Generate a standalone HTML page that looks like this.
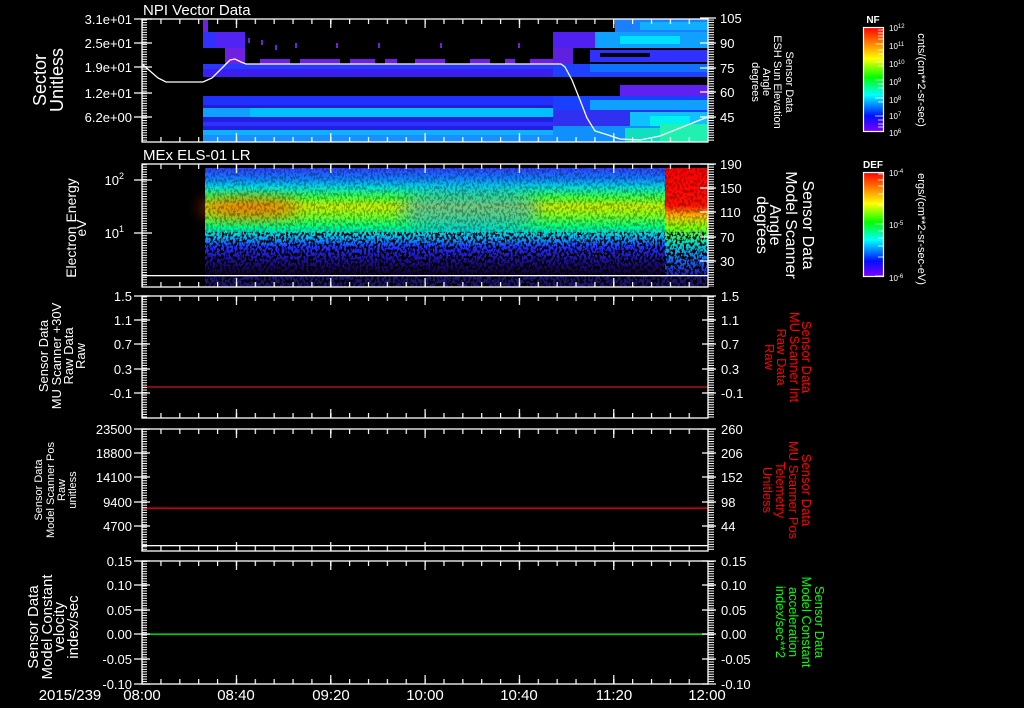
<!DOCTYPE html>
<html><head><meta charset="utf-8"><style>
html,body{margin:0;padding:0;background:#000;}
svg{display:block}
text{font-family:"Liberation Sans",sans-serif;fill:#fff;}
</style></head><body>
<svg width="1024" height="708" viewBox="0 0 1024 708" xmlns="http://www.w3.org/2000/svg">
<defs>
 <pattern id="xm" patternUnits="userSpaceOnUse" x="141.5" y="0" width="18.867" height="10"><rect x="0" y="0" width="1.2" height="10" fill="#fff"/></pattern>
 <pattern id="xM" patternUnits="userSpaceOnUse" x="141.5" y="0" width="94.33" height="10"><rect x="0" y="0" width="1.2" height="10" fill="#fff"/></pattern>
 <pattern id="yt" patternUnits="userSpaceOnUse" x="0" y="0" width="10" height="2.45"><rect x="0" y="0" width="10" height="1" fill="#fff"/></pattern>
 <linearGradient id="cb" x1="0" y1="0" x2="0" y2="1">
  <stop offset="0" stop-color="#ff0000"/><stop offset="0.15" stop-color="#ff8000"/>
  <stop offset="0.3" stop-color="#ffff00"/><stop offset="0.48" stop-color="#00ff00"/>
  <stop offset="0.65" stop-color="#00ffff"/><stop offset="0.85" stop-color="#0010ff"/>
  <stop offset="1" stop-color="#8000ff"/>
 </linearGradient>
 <linearGradient id="p2" x1="0" y1="0" x2="0" y2="1">
  <stop offset="0" stop-color="#3040ff"/><stop offset="0.1" stop-color="#1080ff"/>
  <stop offset="0.18" stop-color="#00e0e0"/><stop offset="0.27" stop-color="#40ff40"/>
  <stop offset="0.36" stop-color="#c8f000"/><stop offset="0.44" stop-color="#80ff20"/>
  <stop offset="0.55" stop-color="#00ff80"/><stop offset="0.64" stop-color="#00c0ff"/>
  <stop offset="0.74" stop-color="#2030ff"/><stop offset="0.86" stop-color="#2010a0"/>
  <stop offset="1" stop-color="#100030"/>
 </linearGradient>
 <linearGradient id="p2r" x1="0" y1="0" x2="0" y2="1">
  <stop offset="0" stop-color="#ff0000"/><stop offset="0.35" stop-color="#ff1000"/>
  <stop offset="0.45" stop-color="#ffc000"/><stop offset="0.55" stop-color="#80ff00"/>
  <stop offset="0.7" stop-color="#00e0c0"/><stop offset="0.85" stop-color="#1070ff"/><stop offset="1" stop-color="#2020c0"/>
 </linearGradient>
 <filter id="nz" x="0" y="0" width="100%" height="100%">
  <feTurbulence type="fractalNoise" baseFrequency="0.45 0.3" numOctaves="2" seed="5" result="t"/>
  <feColorMatrix in="t" type="matrix" values="0 0 0 0 0  0 0 0 0 0  0 0 0 0 0  0 0 0 -8 4.2"/>
 </filter>
 <filter id="bl" x="-50%" y="-50%" width="200%" height="200%"><feGaussianBlur stdDeviation="8"/></filter>
</defs>

<!-- ===== Panel 1 data ===== -->
<g>
 <rect x="203" y="20" width="5" height="12" fill="#7020e0"/>
 <rect x="203" y="32" width="42" height="16" fill="#3030ff"/>
 <rect x="215" y="32" width="30" height="16" fill="#6020f0" opacity="0.7"/>
 <rect x="225" y="48" width="20" height="16" fill="#7020e0"/>
 <rect x="203" y="64" width="350" height="13" fill="#3a20f0"/>
 <rect x="203" y="64" width="350" height="5" fill="#2838ff"/>
 <rect x="203" y="96" width="350" height="9" fill="#2030ff"/>
 <rect x="203" y="105" width="350" height="3" fill="#2020d0"/>
 <rect x="203" y="108" width="350" height="9" fill="#10a0ff"/>
 <rect x="250" y="108" width="303" height="9" fill="#00c0ff"/>
 <rect x="203" y="117" width="350" height="13" fill="#2020e0"/>
 <rect x="203" y="122" width="350" height="4" fill="#3030ff"/>
 <rect x="203" y="130" width="350" height="5" fill="#10b0ff"/>
 <rect x="203" y="135" width="350" height="7" fill="#1890ff"/>
 <g fill="#7020e0">
  <rect x="248" y="38" width="2" height="5"/><rect x="261" y="40" width="2" height="5"/><rect x="275" y="45" width="2" height="5"/>
  <rect x="295" y="43" width="2" height="5"/><rect x="336" y="43" width="2" height="5"/><rect x="378" y="43" width="2" height="5"/>
  <rect x="518" y="43" width="2" height="5"/><rect x="440" y="43" width="2" height="5"/>
  <rect x="260" y="59" width="30" height="5"/><rect x="300" y="59" width="40" height="5"/><rect x="350" y="59" width="25" height="5"/>
  <rect x="385" y="59" width="12" height="5"/><rect x="415" y="59" width="30" height="5"/><rect x="470" y="59" width="20" height="5"/>
  <rect x="505" y="59" width="10" height="5"/><rect x="530" y="59" width="23" height="5"/>
 </g>
 <rect x="553" y="32" width="155" height="16" fill="#5020f0"/>
 <rect x="595" y="32" width="113" height="16" fill="#10a0ff"/>
 <rect x="620" y="36" width="60" height="8" fill="#00e0ff"/>
 <rect x="615" y="19" width="93" height="13" fill="#1a80ff"/>
 <rect x="640" y="22" width="68" height="8" fill="#10b0ff"/>
 <rect x="553" y="48" width="20" height="16" fill="#6020e0"/>
 <rect x="590" y="50" width="118" height="12" fill="#3030ff"/>
 <rect x="600" y="53" width="50" height="4" fill="#000"/>
 <rect x="553" y="64" width="155" height="13" fill="#2040ff"/>
 <rect x="590" y="64" width="118" height="8" fill="#1070ff"/>
 <rect x="620" y="85" width="88" height="11" fill="#6020f0"/>
 <rect x="553" y="96" width="155" height="46" fill="#1a40ff"/>
 <rect x="590" y="100" width="118" height="10" fill="#10a0ff"/>
 <rect x="553" y="110" width="120" height="16" fill="#3030f0"/>
 <rect x="630" y="112" width="78" height="14" fill="#10c0ff"/>
 <rect x="650" y="116" width="40" height="10" fill="#00f0f0"/>
 <rect x="553" y="126" width="155" height="16" fill="#1090ff"/>
 <rect x="625" y="128" width="83" height="14" fill="#10e0c0"/>
 <rect x="660" y="124" width="48" height="18" fill="#20f0b0"/>
 <polyline fill="none" stroke="#fff" stroke-width="1.3" points="142,64 150,71 158,78 166,82 203,82 212,78 218,72 224,66 230,60 235,59 241,62 246,64 561,64 565,67 572,80 580,100 587,118 595,131 605,134 620,139 640,140 660,136 680,128 700,120 708,117"/>
</g>

<!-- ===== Panel 2 data ===== -->
<g>
 <rect x="205" y="168" width="503" height="107" fill="url(#p2)"/>
 <ellipse cx="250" cy="208" rx="50" ry="9" fill="#ff5000" opacity="0.8" filter="url(#bl)"/>
 <ellipse cx="470" cy="210" rx="70" ry="25" fill="#20a0ff" opacity="0.5" filter="url(#bl)"/>
 <rect x="665" y="168" width="43" height="107" fill="url(#p2r)"/>
 <rect x="205" y="168" width="503" height="107" filter="url(#nz)" opacity="0.3"/>
 <rect x="205" y="232" width="503" height="43" filter="url(#nz)" opacity="0.9"/>
 <rect x="205" y="250" width="503" height="25" filter="url(#nz)" opacity="0.9"/>
 <rect x="205" y="276" width="503" height="11" fill="#3020c0" opacity="0.6"/>
 <rect x="205" y="276" width="503" height="11" filter="url(#nz)"/>
 <rect x="205" y="276" width="503" height="11" filter="url(#nz)"/>
 <rect x="142" y="275" width="566" height="1.3" fill="#fff"/>
</g>

<rect x="142" y="386.5" width="566" height="1" fill="#ff2020"/>
<rect x="142" y="507.5" width="566" height="1.3" fill="#ff0000"/>
<rect x="142" y="633.5" width="566" height="1.3" fill="#00ff00"/>
<rect x="142" y="545" width="566" height="1.3" fill="#fff"/>

<g>
 <g fill="none" stroke="#fff" stroke-width="1.3">
  <rect x="142" y="19" width="566" height="123"/>
  <rect x="142" y="164" width="566" height="123"/>
  <rect x="142" y="296" width="566" height="122"/>
  <rect x="142" y="429" width="566" height="122"/>
  <rect x="142" y="561" width="566" height="123"/>
 </g>
 <g>
  <rect x="142" y="19" width="566" height="5" fill="url(#xm)"/><rect x="142" y="19" width="566" height="9" fill="url(#xM)"/>
  <rect x="142" y="137" width="566" height="5" fill="url(#xm)"/><rect x="142" y="133" width="566" height="9" fill="url(#xM)"/>
  <rect x="142" y="164" width="566" height="5" fill="url(#xm)"/><rect x="142" y="164" width="566" height="9" fill="url(#xM)"/>
  <rect x="142" y="282" width="566" height="5" fill="url(#xm)"/><rect x="142" y="278" width="566" height="9" fill="url(#xM)"/>
  <rect x="142" y="296" width="566" height="5" fill="url(#xm)"/><rect x="142" y="296" width="566" height="9" fill="url(#xM)"/>
  <rect x="142" y="413" width="566" height="5" fill="url(#xm)"/><rect x="142" y="409" width="566" height="9" fill="url(#xM)"/>
  <rect x="142" y="429" width="566" height="5" fill="url(#xm)"/><rect x="142" y="429" width="566" height="9" fill="url(#xM)"/>
  <rect x="142" y="546" width="566" height="5" fill="url(#xm)"/><rect x="142" y="542" width="566" height="9" fill="url(#xM)"/>
  <rect x="142" y="561" width="566" height="5" fill="url(#xm)"/><rect x="142" y="561" width="566" height="9" fill="url(#xM)"/>
  <rect x="142" y="679" width="566" height="5" fill="url(#xm)"/><rect x="142" y="675" width="566" height="9" fill="url(#xM)"/>
 </g>
 <g fill="url(#yt)">
  <rect x="142" y="19" width="5" height="123"/><rect x="708" y="19" width="6" height="123"/>
  <rect x="142" y="164" width="5" height="123"/><rect x="708" y="164" width="6" height="123"/>
  <rect x="142" y="296" width="5" height="122"/><rect x="708" y="296" width="6" height="122"/>
  <rect x="142" y="429" width="5" height="122"/><rect x="708" y="429" width="6" height="122"/>
  <rect x="142" y="561" width="5" height="123"/><rect x="708" y="561" width="6" height="123"/>
 </g>
 <g stroke="#fff" stroke-width="1.3">
  <path d="M134 19H152M134 43H152M134 67H152M134 93H152M134 117H152 M700 18H716M700 43H716M700 68H716M700 92H716M700 117H716"/>
  <path d="M134 180H152M134 233H152 M700 164H716M700 188H716M700 212H716M700 237H716M700 261H716"/>
  <path d="M134 296H150M134 320H150M134 344H150M134 369H150M134 393H150 M702 296H716M702 320H716M702 344H716M702 369H716M702 393H716"/>
  <path d="M134 429H150M134 453H150M134 477H150M134 502H150M134 526H150 M702 429H716M702 453H716M702 477H716M702 502H716M702 526H716"/>
  <path d="M134 561H150M134 585H150M134 610H150M134 634H150M134 659H150M134 684H150 M702 561H716M702 585H716M702 610H716M702 634H716M702 659H716M702 684H716"/>
 </g>
</g>

<text x="143" y="15" font-size="15">NPI Vector Data</text>
<text x="143" y="160" font-size="15">MEx ELS-01 LR</text>

<g font-size="13" text-anchor="end">
 <text x="132" y="24">3.1e+01</text><text x="132" y="48">2.5e+01</text><text x="132" y="72">1.9e+01</text>
 <text x="132" y="98">1.2e+01</text><text x="132" y="122">6.2e+00</text>
 <text x="124" y="185">10<tspan font-size="9" dy="-6">2</tspan></text>
 <text x="124" y="238">10<tspan font-size="9" dy="-6">1</tspan></text>
 <text x="132" y="301">1.5</text><text x="132" y="325">1.1</text><text x="132" y="349">0.7</text><text x="132" y="374">0.3</text><text x="132" y="398">-0.1</text>
 <text x="132" y="434">23500</text><text x="132" y="458">18800</text><text x="132" y="482">14100</text><text x="132" y="507">9400</text><text x="132" y="531">4700</text>
 <text x="132" y="566">0.15</text><text x="132" y="590">0.10</text><text x="132" y="615">0.05</text><text x="132" y="639">0.00</text><text x="132" y="664">-0.05</text><text x="132" y="689">-0.10</text>
</g>
<g font-size="13">
 <text x="720" y="23">105</text><text x="720" y="48">90</text><text x="720" y="73">75</text><text x="720" y="97">60</text><text x="720" y="122">45</text>
 <text x="720" y="169">190</text><text x="720" y="193">150</text><text x="720" y="217">110</text><text x="720" y="242">70</text><text x="720" y="266">30</text>
 <text x="721" y="301">1.5</text><text x="721" y="325">1.1</text><text x="721" y="349">0.7</text><text x="721" y="374">0.3</text><text x="721" y="398">-0.1</text>
 <text x="721" y="434">260</text><text x="721" y="458">206</text><text x="721" y="482">152</text><text x="721" y="507">98</text><text x="721" y="531">44</text>
 <text x="721" y="566">0.15</text><text x="721" y="590">0.10</text><text x="721" y="615">0.05</text><text x="721" y="639">0.00</text><text x="721" y="664">-0.05</text><text x="721" y="689">-0.10</text>
</g>
<g font-size="15" text-anchor="middle">
 <text x="70" y="700">2015/239</text>
 <text x="142" y="700">08:00</text><text x="236" y="700">08:40</text><text x="331" y="700">09:20</text>
 <text x="425" y="700">10:00</text><text x="519" y="700">10:40</text><text x="614" y="700">11:20</text><text x="707" y="700">12:00</text>
</g>

<g text-anchor="middle">
 <g font-size="18"><text transform="translate(46,80) rotate(-90)">Sector</text><text transform="translate(63,80) rotate(-90)">Unitless</text></g>
 <g font-size="14"><text transform="translate(76,228) rotate(-90)">Electron Energy</text><text transform="translate(86,228) rotate(-90)">eV</text></g>
 <g font-size="13"><text transform="translate(48,356) rotate(-90)">Sensor Data</text><text transform="translate(61,356) rotate(-90)">MU Scanner +30V</text><text transform="translate(73,356) rotate(-90)">Raw Data</text><text transform="translate(85,356) rotate(-90)">Raw</text></g>
 <g font-size="11"><text transform="translate(42,490) rotate(-90)">Sensor Data</text><text transform="translate(54,490) rotate(-90)">Model Scanner Pos</text><text transform="translate(65,490) rotate(-90)">Raw</text><text transform="translate(76,490) rotate(-90)">unitless</text></g>
 <g font-size="15"><text transform="translate(38,627) rotate(-90)">Sensor Data</text><text transform="translate(52,627) rotate(-90)">Model Constant</text><text transform="translate(64,627) rotate(-90)">velocity</text><text transform="translate(78,627) rotate(-90)">index/sec</text></g>
</g>

<g text-anchor="middle">
 <g font-size="11"><text transform="translate(786,82) rotate(90)">Sensor Data</text><text transform="translate(774,82) rotate(90)">ESH Sun Elevation</text><text transform="translate(763,82) rotate(90)">Angle</text><text transform="translate(752,82) rotate(90)">degrees</text></g>
 <g font-size="16"><text transform="translate(803,225) rotate(90)">Sensor Data</text><text transform="translate(786,225) rotate(90)">Model Scanner</text><text transform="translate(770,225) rotate(90)">Angle</text><text transform="translate(757,225) rotate(90)">degrees</text></g>
 <g font-size="13"><text transform="translate(802,357) rotate(90)" style="fill:#ff0000">Sensor Data</text><text transform="translate(790,357) rotate(90)" style="fill:#ff0000">MU Scanner Int</text><text transform="translate(777,357) rotate(90)" style="fill:#ff0000">Raw Data</text><text transform="translate(765,357) rotate(90)" style="fill:#ff0000">Raw</text></g>
 <g font-size="13"><text transform="translate(802,490) rotate(90)" style="fill:#ff0000">Sensor Data</text><text transform="translate(789,490) rotate(90)" style="fill:#ff0000">MU Scanner Pos</text><text transform="translate(776,490) rotate(90)" style="fill:#ff0000">Telemetry</text><text transform="translate(763,490) rotate(90)" style="fill:#ff0000">Unitless</text></g>
 <g font-size="13"><text transform="translate(815,622) rotate(90)" style="fill:#00ff00">Sensor Data</text><text transform="translate(802,622) rotate(90)" style="fill:#00ff00">Model Constant</text><text transform="translate(789,622) rotate(90)" style="fill:#00ff00">acceleration</text><text transform="translate(776,622) rotate(90)" style="fill:#00ff00">index/sec**2</text></g>
</g>

<g>
 <rect x="863.5" y="27.5" width="20" height="104" fill="url(#cb)" stroke="#fff" stroke-width="1.2"/>
 <text x="873" y="23" font-size="10" text-anchor="middle" font-weight="bold">NF</text>
 <g stroke="#fff" stroke-width="0.8"><path d="M878 30H883M878 33H883M878 36H883M878 39H883M875 44H883M878 50H883M878 54H883M875 62H883M878 66H883M875 80H883M878 84H883M878 88H883M875 98H883M878 102H883M875 116H883M878 120H883M878 124H883M878 127H883"/></g>
 <g font-size="8"><text x="889" y="31">10<tspan font-size="6" dy="-3">12</tspan></text><text x="889" y="49">10<tspan font-size="6" dy="-3">11</tspan></text><text x="889" y="67">10<tspan font-size="6" dy="-3">10</tspan></text><text x="889" y="85">10<tspan font-size="6" dy="-3">9</tspan></text><text x="889" y="103">10<tspan font-size="6" dy="-3">8</tspan></text><text x="889" y="119">10<tspan font-size="6" dy="-3">7</tspan></text><text x="889" y="136">10<tspan font-size="6" dy="-3">6</tspan></text></g>
 <text transform="translate(918,80) rotate(90)" font-size="11" text-anchor="middle">cnts/(cm**2-sr-sec)</text>

 <rect x="863.5" y="172.5" width="20" height="104" fill="url(#cb)" stroke="#fff" stroke-width="1.2"/>
 <text x="873" y="168" font-size="10" text-anchor="middle" font-weight="bold">DEF</text>
 <g stroke="#fff" stroke-width="0.8"><path d="M878 174H883M878 180H883M878 186H883M878 194H883M878 205H883M875 224H883M878 231H883M878 238H883M878 246H883M878 257H883M875 276H883"/></g>
 <g font-size="8"><text x="889" y="176">10<tspan font-size="6" dy="-3">-4</tspan></text><text x="889" y="228">10<tspan font-size="6" dy="-3">-5</tspan></text><text x="889" y="281">10<tspan font-size="6" dy="-3">-6</tspan></text></g>
 <text transform="translate(918,229) rotate(90)" font-size="11" text-anchor="middle">ergs/(cm**2-sr-sec-eV)</text>
</g>
</svg>
</body></html>
